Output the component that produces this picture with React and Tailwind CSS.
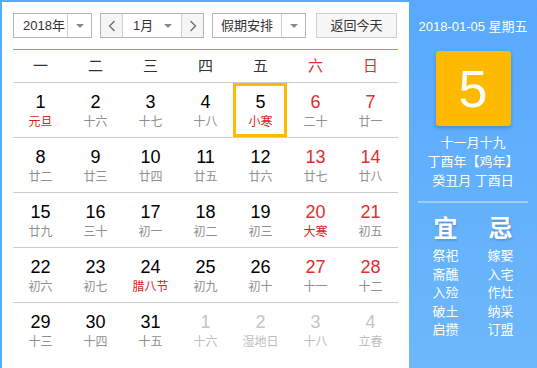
import React from 'react';

const weekdays = ['一', '二', '三', '四', '五', '六', '日'];

// t: 0 normal, 1 weekend, 2 other month
const weeks = [
    [['1', '元旦', 0, 1], ['2', '十六'], ['3', '十七'], ['4', '十八'], ['5', '小寒', 0, 1], ['6', '二十', 1], ['7', '廿一', 1]],
    [['8', '廿二'], ['9', '廿三'], ['10', '廿四'], ['11', '廿五'], ['12', '廿六'], ['13', '廿七', 1], ['14', '廿八', 1]],
    [['15', '廿九'], ['16', '三十'], ['17', '初一'], ['18', '初二'], ['19', '初三'], ['20', '大寒', 1, 1], ['21', '初五', 1]],
    [['22', '初六'], ['23', '初七'], ['24', '腊八节', 0, 1], ['25', '初九'], ['26', '初十'], ['27', '十一', 1], ['28', '十二', 1]],
    [['29', '十三'], ['30', '十四'], ['31', '十五'], ['1', '十六', 2], ['2', '湿地日', 2], ['3', '十八', 2], ['4', '立春', 2]],
];

const yi = ['祭祀', '斋醮', '入殓', '破土', '启攒'];
const ji = ['嫁娶', '入宅', '作灶', '纳采', '订盟'];

const Caret = () => (
    <span className="w-0 h-0 border-l-[4px] border-r-[4px] border-t-[4px] border-l-transparent border-r-transparent border-t-[#8a8a8a]" />
);

const Chevron = ({ dir }) => (
    <svg width="8" height="12" viewBox="0 0 8 12" fill="none" stroke="#666" strokeWidth="1.2">
        {dir === 'left' ? <path d="M6.5 1 L1.5 6 L6.5 11" /> : <path d="M1.5 1 L6.5 6 L1.5 11" />}
    </svg>
);

export default function App() {
    return (
        <div
            className="w-[537px] h-[368px] flex overflow-hidden"
            style={{ fontFamily: '"Liberation Sans", "Noto Sans CJK SC", sans-serif' }}
        >
            {/* 左侧日历 */}
            <div className="w-[409px] h-full bg-white border-l-2 border-t-2 border-[#5aabff] pl-[11px] pr-[11px] pt-[11px]">
                <div className="flex h-[25px] text-[13px] text-[#333]">
                    <div className="w-[79px] flex border border-[#b5b5b5] bg-white">
                        <div className="flex-1 flex items-center pl-[9px]">2018年</div>
                        <div className="w-[24px] flex items-center justify-center border-l border-[#d0d0d0]"><Caret /></div>
                    </div>
                    <div className="w-[104px] ml-[8px] flex border border-[#b5b5b5]">
                        <div className="w-[22px] flex items-center justify-center bg-[#f5f5f5] border-r border-[#d0d0d0]"><Chevron dir="left" /></div>
                        <div className="flex-1 flex items-center justify-between pl-[10px] pr-[9px] bg-white">
                            <span>1月</span>
                            <Caret />
                        </div>
                        <div className="w-[22px] flex items-center justify-center bg-[#f5f5f5] border-l border-[#d0d0d0]"><Chevron dir="right" /></div>
                    </div>
                    <div className="w-[94px] ml-[8px] flex border border-[#b5b5b5]">
                        <div className="flex-1 flex items-center justify-center">假期安排</div>
                        <div className="w-[24px] flex items-center justify-center border-l border-[#d0d0d0]"><Caret /></div>
                    </div>
                    <button className="w-[81px] ml-[10px] border border-[#cfcfcf] bg-[#f7f7f7] text-[13px] text-[#333]">返回今天</button>
                </div>

                <div className="mt-[11px] h-px bg-[#5aabff]" />

                <div className="grid grid-cols-7 h-[33px] border-b border-[#cccccc] text-[15px] text-[#333]">
                    {weekdays.map((w, i) => (
                        <div key={w} className={`flex items-center justify-center ${i >= 5 ? 'text-[#e02d2d]' : ''}`}>{w}</div>
                    ))}
                </div>

                {weeks.map((week, wi) => (
                    <div key={wi} className={`grid grid-cols-7 h-[55px] ${wi < 4 ? 'border-b border-[#cccccc]' : ''}`}>
                        {week.map(([d, l, t = 0, fest = 0], di) => {
                            const numColor = t === 2 ? 'text-[#c4c4c4]' : t === 1 ? 'text-[#e02d2d]' : 'text-black';
                            const lunarColor = fest ? 'text-[#e02020]' : t === 2 ? 'text-[#bdbdbd]' : 'text-[#8f8f8f]';
                            const today = wi === 0 && di === 4;
                            return (
                                <div key={di} className="relative flex flex-col items-center pt-[9px]">
                                    {today && <div className="absolute left-0 top-0 w-[54px] h-[54px] border-[3px] border-[#ffbb00]" />}
                                    <div className={`text-[18px] leading-[20px] ${numColor}`}>{d}</div>
                                    <div className={`text-[12px] leading-[16px] mt-[2px] ${lunarColor}`}>{l}</div>
                                </div>
                            );
                        })}
                    </div>
                ))}
            </div>

            {/* 右侧信息 */}
            <div className="flex-1 h-full bg-gradient-to-b from-[#58a9ff] to-[#6db7fa] text-white flex flex-col items-center">
                <div className="mt-[18px] text-[13px] leading-[18px]">2018-01-05 星期五</div>
                <div className="mt-[15px] w-[75px] h-[75px] rounded-[3px] bg-[#ffba00] shadow-[0_2px_4px_rgba(0,0,0,0.2)] flex items-center justify-center text-[52px] leading-none">5</div>
                <div className="mt-[7px] text-[13px] leading-[19px] text-center">
                    <div>十一月十九</div>
                    <div>丁酉年【鸡年】</div>
                    <div>癸丑月 丁酉日</div>
                </div>
                <div className="mt-[11px] w-[110px] h-[2px] bg-[#9ccdff]" />
                <div className="grid grid-cols-2 w-[110px] mt-[12px]">
                    {[['宜', yi], ['忌', ji]].map(([h, items]) => (
                        <div key={h} className="flex flex-col items-center">
                            <div className="text-[24px] leading-[28px] font-bold [text-shadow:1px_2px_2px_rgba(0,0,0,0.15)]">{h}</div>
                            <div className="mt-[4px] text-[13px] leading-[18.5px] text-center">
                                {items.map(x => <div key={x}>{x}</div>)}
                            </div>
                        </div>
                    ))}
                </div>
            </div>
        </div>
    );
}
